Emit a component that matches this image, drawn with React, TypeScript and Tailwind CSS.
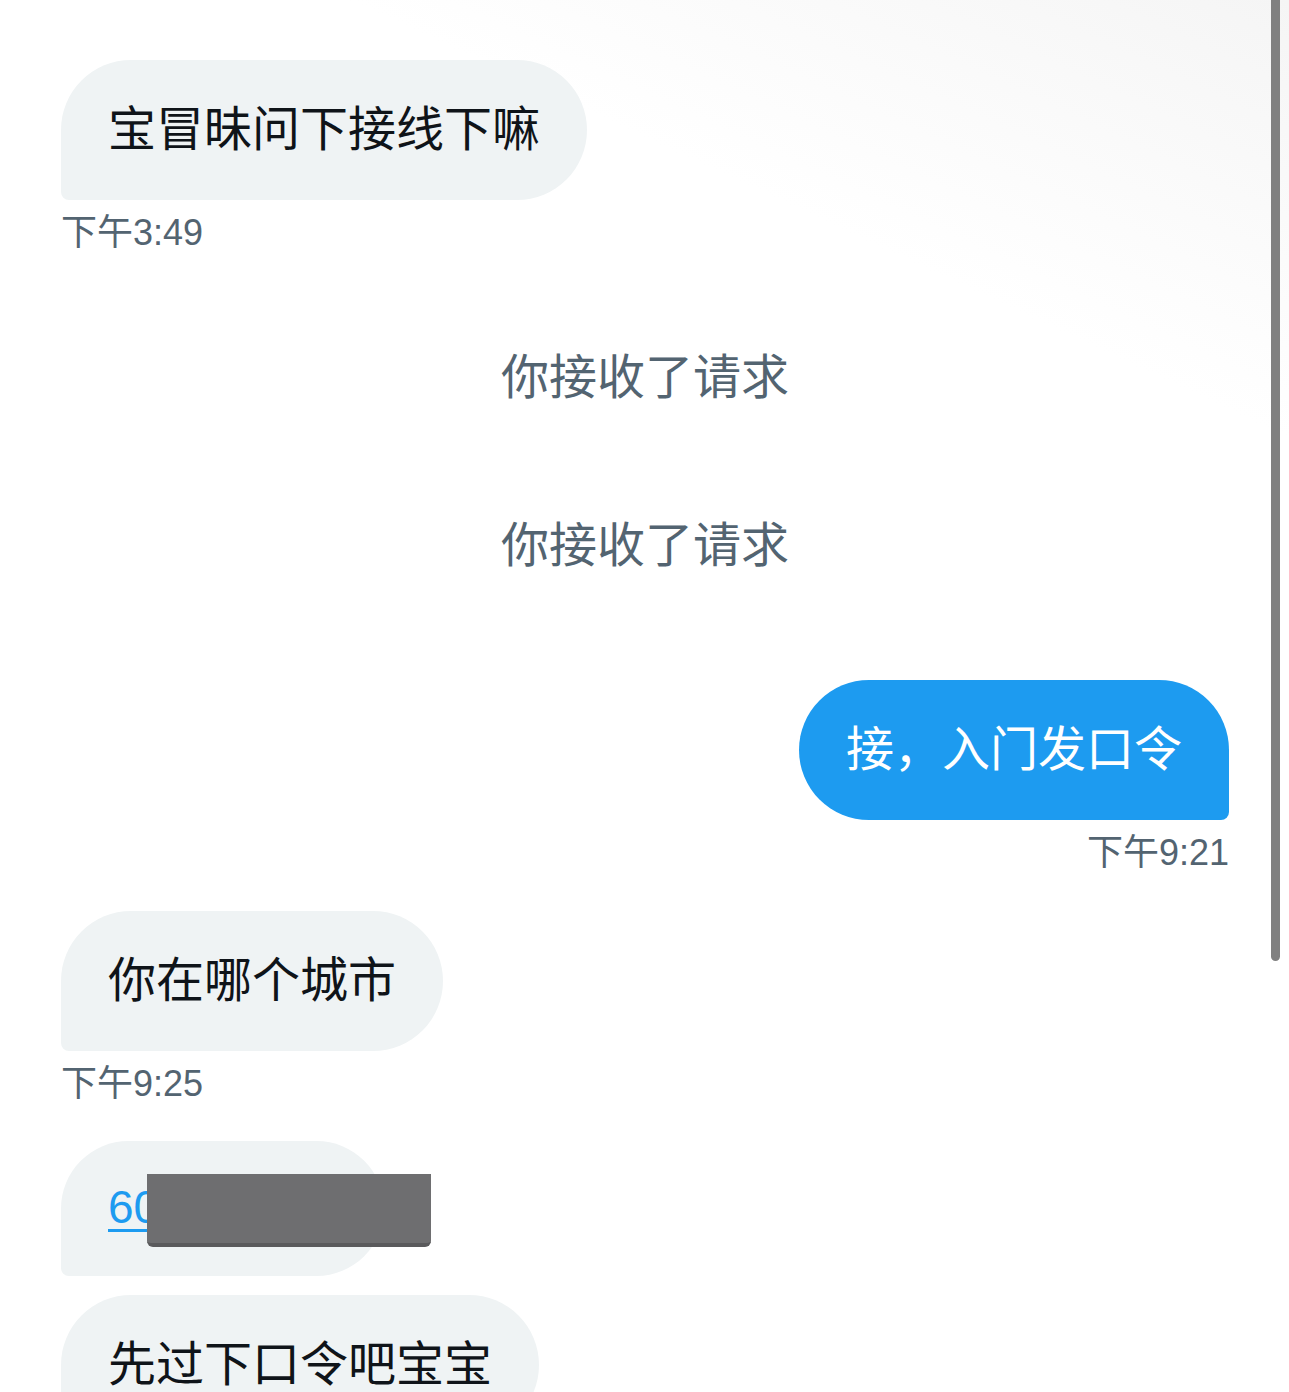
const font = "font-['Liberation_Sans','Noto_Sans_CJK_SC',sans-serif]"

function Stamp({ children, right }: { children: string; right?: boolean }) {
  return (
    <div
      className={`mt-[11px] text-[36px] leading-[44px] text-[#536471] ${right ? "text-right" : ""}`}
    >
      {children}
    </div>
  )
}

function Incoming({ children }: { children: React.ReactNode }) {
  return (
    <div className="flex">
      <div className="rounded-[70px] rounded-bl-[8px] bg-[#eff3f4] px-[47px] py-[40px] text-[48px] leading-[60px] text-[#0f1419]">
        {children}
      </div>
    </div>
  )
}

function Notice({ children }: { children: string }) {
  return (
    <div className="text-center text-[48px] leading-[60px] text-[#536471]">
      {children}
    </div>
  )
}

export default function App() {
  return (
    <div
      className={`relative h-[1392px] overflow-hidden bg-[linear-gradient(205deg,#f5f5f5_0%,#ffffff_22%)] ${font}`}
    >
      <div className="flex flex-col pt-[60px] pl-[61px] pr-[60px]">
        <Incoming>宝冒昧问下接线下嘛</Incoming>
        <Stamp>下午3:49</Stamp>

        <div className="mt-[93px]">
          <Notice>你接收了请求</Notice>
        </div>
        <div className="mt-[108px]">
          <Notice>你接收了请求</Notice>
        </div>

        <div className="mt-[104px] flex justify-end">
          <div className="rounded-[70px] rounded-br-[8px] bg-[#1d9bf0] px-[47px] py-[40px] text-[48px] leading-[60px] text-white">
            接，入门发口令
          </div>
        </div>
        <Stamp right>下午9:21</Stamp>

        <div className="mt-[36px]">
          <Incoming>你在哪个城市</Incoming>
        </div>
        <Stamp>下午9:25</Stamp>

        <div className="mt-[35px] flex">
          <div className="relative h-[135px] rounded-[68px] rounded-bl-[8px] bg-[#eff3f4] pl-[47px] pr-[47px] pt-[38px] text-[46px] leading-[56px]">
            <a className="text-[#1d9bf0] underline decoration-[3px] underline-offset-[6px]">
              60
              <span className="inline-block w-[178px]" />
            </a>
            <div className="absolute left-[86px] top-[33px] h-[73px] w-[284px] rounded-b-[6px] border-b-[4px] border-[#5a5a5c] bg-[#6e6e70]" />
          </div>
        </div>

        <div className="mt-[19px]">
          <Incoming>先过下口令吧宝宝</Incoming>
        </div>
      </div>

      <div className="absolute right-[9px] top-0 h-[961px] w-[9px] rounded-b-full bg-[#808080]" />
    </div>
  )
}
